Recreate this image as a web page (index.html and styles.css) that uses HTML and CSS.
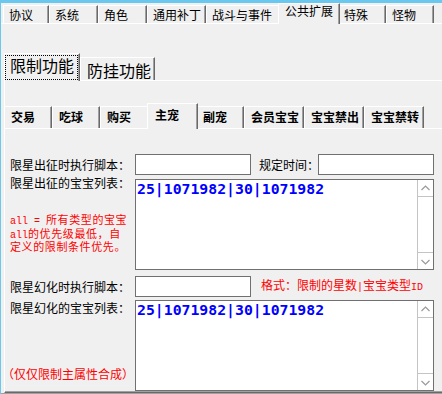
FILE: index.html
```html
<!DOCTYPE html>
<html>
<head>
<meta charset="utf-8">
<link rel="stylesheet" href="styles.css">
</head>
<body>
<div class="window">
  <div class="tabs t1">
    <div class="tab">协议</div>
    <div class="tab">系统</div>
    <div class="tab">角色</div>
    <div class="tab">通用补丁</div>
    <div class="tab">战斗与事件</div>
    <div class="tab sel">公共扩展</div>
    <div class="tab">特殊</div>
    <div class="tab">怪物</div>
  </div>
  <div class="panel p1">
    <div class="tabs t2">
      <div class="tab sel focus">限制功能</div>
      <div class="tab">防挂功能</div>
    </div>
    <div class="panel p2">
      <div class="tabs t3">
        <div class="tab">交易</div>
        <div class="tab">吃球</div>
        <div class="tab">购买</div>
        <div class="tab sel">主宠</div>
        <div class="tab">副宠</div>
        <div class="tab">会员宝宝</div>
        <div class="tab">宝宝禁出</div>
        <div class="tab">宝宝禁转</div>
      </div>
      <div class="panel p3">
        <div class="row ra">
          <div class="lbl">限星出征时执行脚本：</div>
          <div class="input"></div>
          <div class="lbl2">规定时间：</div>
          <div class="input"></div>
        </div>
        <div class="row rb">
          <div class="lblcol">
            <div class="lbl top-b">限星出征的宝宝列表：</div>
            <div class="note"><span class="m">all = </span>所有类型的宝宝<br><span class="m">all</span>的优先级最低，自<br>定义的限制条件优先。</div>
          </div>
          <div class="textarea">
            <div class="ta-text">25|1071982|30|1071982</div>
            <div class="sb">
              <div class="sb-btn up"><svg width="15" height="16" viewBox="0 0 15 16"><polyline points="3.5,10 7.5,6 11.5,10" fill="none" stroke="#9a9a9a" stroke-width="1.2"/></svg></div>
              <div class="sb-track"></div>
              <div class="sb-btn down"><svg width="15" height="16" viewBox="0 0 15 16"><polyline points="3.5,7 7.5,11 11.5,7" fill="none" stroke="#9a9a9a" stroke-width="1.2"/></svg></div>
            </div>
          </div>
        </div>
        <div class="row rc">
          <div class="lbl">限星幻化时执行脚本：</div>
          <div class="input"></div>
          <div class="fmt">格式：限制的星数<span class="m">|</span>宝宝类型<span class="m">ID</span></div>
        </div>
        <div class="row rd">
          <div class="lblcol spread">
            <div class="lbl top-d">限星幻化的宝宝列表：</div>
            <div class="note2">（仅仅限制主属性合成）</div>
          </div>
          <div class="textarea">
            <div class="ta-text">25|1071982|30|1071982</div>
            <div class="sb">
              <div class="sb-btn up"><svg width="15" height="16" viewBox="0 0 15 16"><polyline points="3.5,10 7.5,6 11.5,10" fill="none" stroke="#9a9a9a" stroke-width="1.2"/></svg></div>
              <div class="sb-track"></div>
              <div class="sb-btn down"><svg width="15" height="16" viewBox="0 0 15 16"><polyline points="3.5,7 7.5,11 11.5,7" fill="none" stroke="#9a9a9a" stroke-width="1.2"/></svg></div>
            </div>
          </div>
        </div>
      </div>
    </div>
  </div>
</div>
</body>
</html>
```

FILE: styles.css
```css
* { box-sizing: border-box; margin: 0; padding: 0; }
html, body { width: 442px; height: 394px; overflow: hidden; }
body {
  background: #f0f0f0;
  font-family: "Noto Sans CJK SC", "Noto Sans", sans-serif;
  font-size: 12px;
  color: #000;
}
.window {
  width: 442px;
  height: 394px;
  border-top: 3px solid #6ac7ee;
  border-left: 1px solid #6ac7ee;
  display: flex;
  flex-direction: column;
}
.tabs { display: grid; position: relative; z-index: 1; }
.tab {
  border-top: 1px solid #fff;
  border-left: 1px solid #fff;
  border-right: 1px solid #696969;
  box-shadow: inset -1px 0 #a0a0a0;
  background: #f0f0f0;
  white-space: nowrap;
}
.tab.sel { position: relative; z-index: 2; }

/* top tab row */
.t1 {
  height: 20px;
  padding-left: 2px;
  grid-template-columns: 46px 49px 49px 59px 74px 58px 48px 48px;
  grid-template-rows: 20px;
  line-height: 14px;
}
.t1 .tab { margin-top: 2px; padding: 2px 0 0 5px; }
.t1 .tab.sel { margin: 0 -2px -1px; padding: 0 0 0 6px; }

/* panels */
.panel {
  flex: 1;
  display: flex;
  flex-direction: column;
  border-top: 1px solid #fff;
}
.p1 { padding: 29px 0 0 3px; border-bottom: 1px solid #a0a0a0; }
.p2 { padding-top: 22px; border-left: 1px solid #fff; border-bottom: 1px solid #696969; }
.p3 { padding: 25px 0 0 5px; border-bottom: 1px solid #a0a0a0; }

/* second row of tabs */
.t2 {
  height: 27px;
  grid-template-columns: 76px 75px;
  grid-template-rows: 27px;
  font-size: 16px;
  line-height: 18px;
}
.t2 .tab { margin-top: 4px; padding: 3px 0 0 6px; }
.t2 .tab.sel { margin: 0 0 -1px; padding: 2px 0 0 5px; }
.focus::after {
  content: "";
  position: absolute;
  left: 0; right: 1px; top: 1px; bottom: 1px;
  border: 1px dotted #000;
}

/* third row of tabs */
.t3 {
  margin-left: -1px;
  height: 25px;
  grid-template-columns: 48px 48px 49px 47px 48px 60px 60px 60px;
  grid-template-rows: 25px;
  font-weight: bold;
  line-height: 14px;
}
.t3 .tab { margin-top: 3px; padding: 3px 0 0 6px; }
.t3 .tab.sel { margin: 0 -2px -1px; padding: 4px 0 0 7px; }

/* form */
.row { display: flex; }
.ra, .rc { height: 21px; align-items: center; }
.rb { margin-top: 4px; height: 91px; }
.rc { margin-top: 6px; }
.rd { margin-top: 3px; height: 91px; }
.lbl { width: 125px; line-height: 14px; white-space: nowrap; }
.lblcol { width: 125px; display: flex; flex-direction: column; }
.lblcol.spread { justify-content: space-between; padding-bottom: 10px; }
.top-b { margin-top: -3px; }
.top-d { margin-top: 1px; }
.input {
  width: 116px;
  height: 21px;
  background: #fff;
  border: 1px solid #707070;
}
.lbl2 { width: 59px; margin-left: 8px; line-height: 14px; white-space: nowrap; }
.note {
  margin-top: 24px;
  color: #ff0000;
  font-size: 11px;
  line-height: 11.5px;
  letter-spacing: 0.6px;
  white-space: nowrap;
}
.note2 {
  margin-left: -8px;
  color: #ff0000;
  line-height: 14px;
  white-space: nowrap;
}
.m { font-family: "Liberation Mono", monospace; font-size: 10px; letter-spacing: 0; }
.fmt { margin-left: 10px; color: #ff0000; line-height: 14px; white-space: nowrap; }

.textarea {
  width: 299px;
  height: 91px;
  background: #fff;
  border: 1px solid #707070;
  display: flex;
}
.ta-text {
  flex: 1;
  padding: 0 0 0 1px;
  font-family: "DejaVu Sans Mono", monospace;
  font-weight: bold;
  font-size: 14.8px;
  line-height: 17px;
  color: #0000ff;
  white-space: nowrap;
}
.sb {
  width: 16px;
  border-left: 1px solid #c4c4c4;
  display: flex;
  flex-direction: column;
  background: #fff;
}
.sb-btn { height: 17px; display: flex; align-items: center; justify-content: center; }
.sb-btn.up { border-bottom: 1px solid #c4c4c4; }
.sb-btn.down { border-top: 1px solid #c4c4c4; }
.sb-track { flex: 1; }
```
